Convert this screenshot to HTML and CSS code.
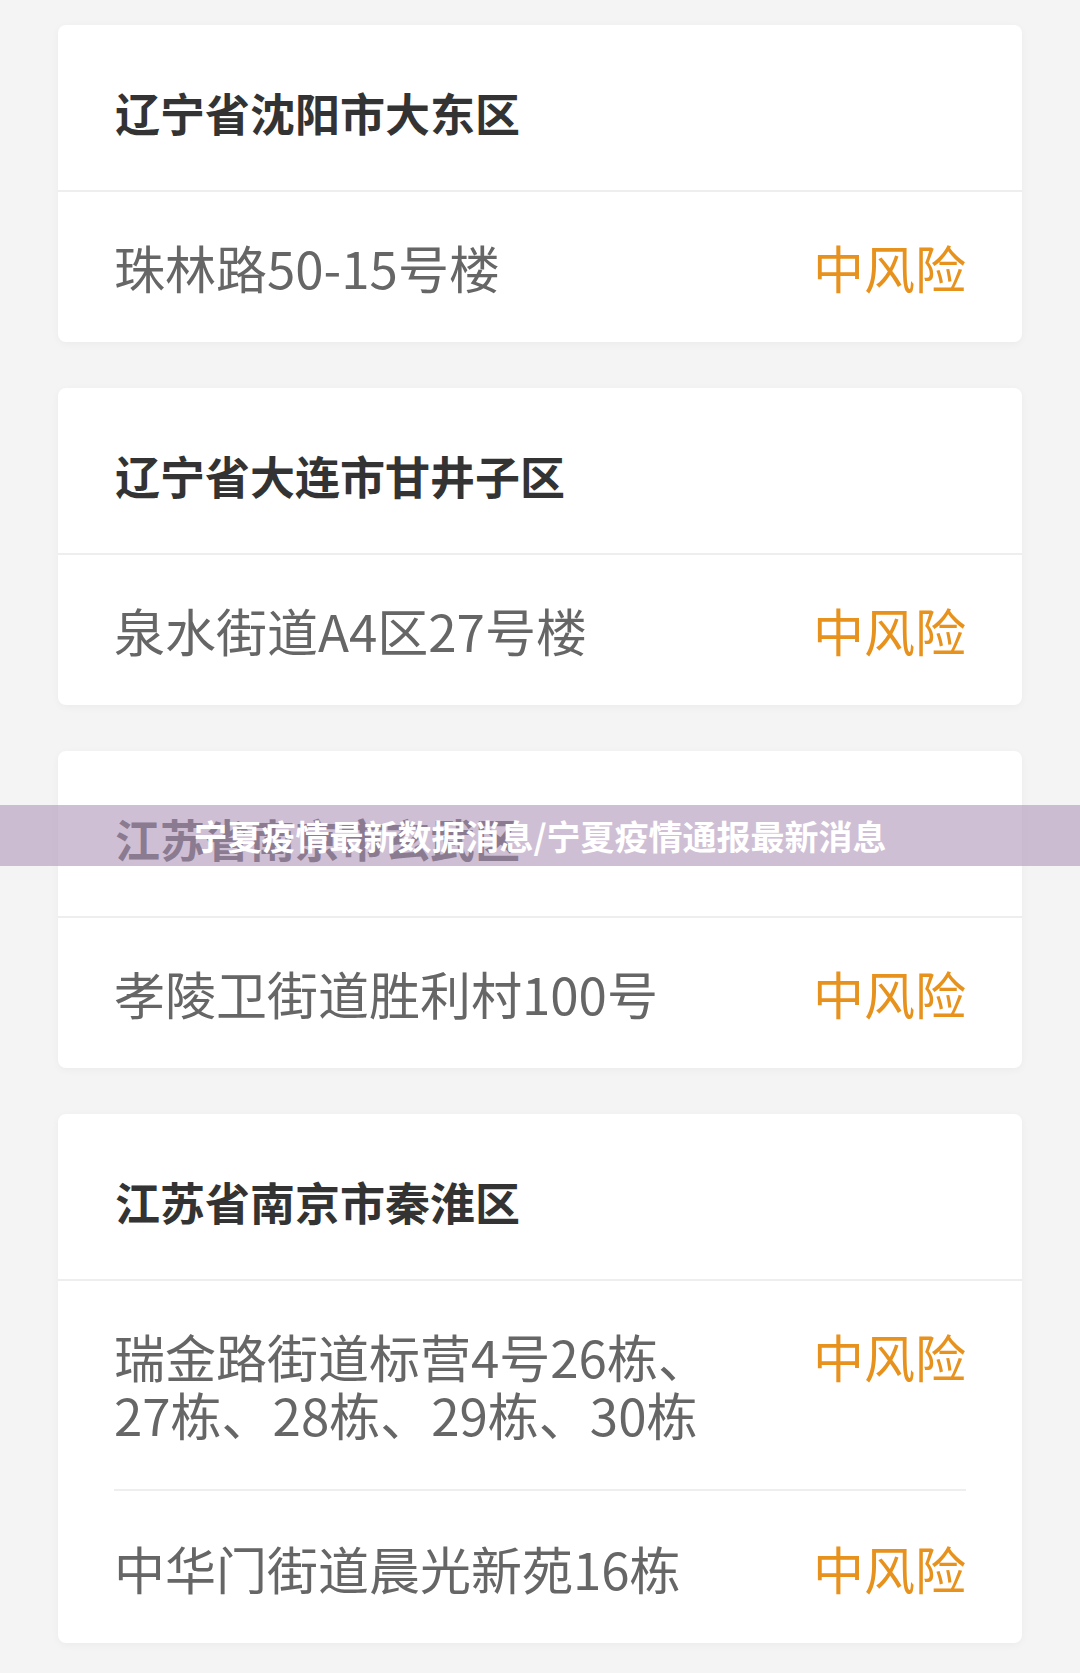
FILE: index.html
```html
<!DOCTYPE html>
<html lang="zh-CN">
<head>
    <meta charset="UTF-8">
    <meta name="viewport" content="width=device-width, initial-scale=1.0">
    <title>宁夏疫情最新数据消息</title>
    <link rel="stylesheet" href="styles.css">
</head>
<body>
    <div class="list">
        <div class="card">
            <div class="card-head">辽宁省沈阳市大东区</div>
            <div class="row">
                <span class="addr">珠林路50-15号楼</span>
                <span class="risk">中风险</span>
            </div>
        </div>

        <div class="card">
            <div class="card-head">辽宁省大连市甘井子区</div>
            <div class="row">
                <span class="addr">泉水街道A4区27号楼</span>
                <span class="risk">中风险</span>
            </div>
        </div>

        <div class="card">
            <div class="card-head">江苏省南京市玄武区</div>
            <div class="row">
                <span class="addr">孝陵卫街道胜利村100号</span>
                <span class="risk">中风险</span>
            </div>
        </div>

        <div class="card">
            <div class="card-head">江苏省南京市秦淮区</div>
            <div class="row">
                <span class="addr">瑞金路街道标营4号26栋、27栋、28栋、29栋、30栋</span>
                <span class="risk">中风险</span>
            </div>
            <div class="row">
                <span class="addr">中华门街道晨光新苑16栋</span>
                <span class="risk">中风险</span>
            </div>
        </div>
    </div>

    <!-- 标题横幅 -->
    <div class="banner">宁夏疫情最新数据消息/宁夏疫情通报最新消息</div>
</body>
</html>
```

FILE: styles.css
```css
body {
    margin: 0;
    background-color: #f4f4f4;
    font-family: "Noto Sans CJK SC", "Noto Sans", sans-serif;
}

.list {
    display: flex;
    flex-direction: column;
    gap: 46px;
    padding: 25px 58px;
}

.card {
    background-color: #ffffff;
    border-radius: 8px;
    box-shadow: 0 2px 8px rgba(0, 0, 0, 0.04);
}

.card-head {
    display: flex;
    align-items: center;
    box-sizing: border-box;
    height: 167px;
    padding: 9px 57px 0;
    border-bottom: 2px solid #eeeeee;
    color: #333333;
    font-size: 45px;
    font-weight: bold;
}

.row {
    display: flex;
    justify-content: space-between;
    align-items: flex-start;
    margin: 0 56px;
    padding: 46px 0;
    font-size: 51px;
    line-height: 58px;
}

.row + .row {
    border-top: 2px solid #eeeeee;
    padding-top: 48px;
}

.addr {
    color: #666666;
    max-width: 610px;
}

.risk {
    color: #e8921e;
    white-space: nowrap;
}

/* 横幅压在卡片上面 */
.banner {
    position: absolute;
    top: 805px;
    left: 0;
    right: 0;
    height: 61px;
    line-height: 61px;
    background-color: rgba(183, 160, 193, 0.67);
    color: #ffffff;
    font-size: 34px;
    font-weight: bold;
    text-align: center;
}
```
